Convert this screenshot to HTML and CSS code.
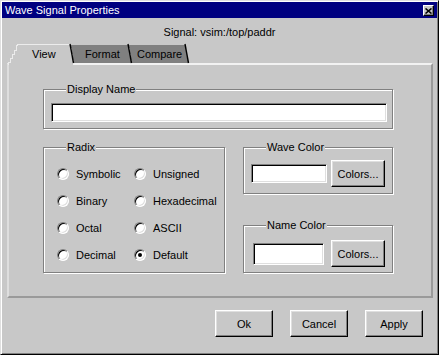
FILE: index.html
```html
<!DOCTYPE html>
<html lang="en">
<head>
    <meta charset="UTF-8">
    <title>Wave Signal Properties</title>
    <link rel="stylesheet" href="styles.css">
</head>
<body>

<div class="window">
    <div class="titlebar">
        <span class="title">Wave Signal Properties</span>
        <button class="close-btn" type="button">
            <svg width="7" height="6" viewBox="0 0 7 6"><path d="M0.5 0.5 L6.5 5.5 M6.5 0.5 L0.5 5.5" stroke="#000" stroke-width="1.6" fill="none"/></svg>
        </button>
    </div>

    <div class="signal">Signal: vsim:/top/paddr</div>

    <!-- tab strip: shapes drawn in svg, labels laid on top -->
    <div class="tabs">
        <svg class="tab-shapes" width="190" height="22" viewBox="0 0 190 22" shape-rendering="crispEdges">
            <polygon points="122,2 178,2 181,20 125,20" fill="#808080"/>
            <polygon points="64,2 121,2 124,20 67,20" fill="#808080"/>
            <polygon points="2,22 2,19 10,2 63,2 66,20 66,22" fill="#c8c8c8"/>
            <polyline points="1.5,22 1.5,19.5 3.5,19.5 3.5,15.5 5.5,15.5 5.5,11.5 7.5,11.5 7.5,7.5 9.5,7.5 9.5,3.5 10.5,1.5 63,1.5" stroke="#ececec" fill="none"/>
            <line x1="63" y1="1" x2="66.5" y2="20" stroke="#000" stroke-width="1.4" shape-rendering="auto"/>
            <line x1="121" y1="1" x2="124.5" y2="20" stroke="#000" stroke-width="1.4" shape-rendering="auto"/>
            <line x1="178" y1="1" x2="181.5" y2="20" stroke="#000" stroke-width="1.4" shape-rendering="auto"/>
        </svg>
        <div class="tab-labels">
            <span class="tab-label tab-view">View</span>
            <span class="tab-label tab-format">Format</span>
            <span class="tab-label">Compare</span>
        </div>
    </div>

    <div class="panel">
        <fieldset class="group group-name">
            <legend>Display Name</legend>
            <input type="text" class="field field-name">
        </fieldset>

        <div class="group-row">
            <fieldset class="group group-radix">
                <legend>Radix</legend>
                <div class="radix-grid">
                    <label class="radio"><span class="radio-mark"></span>Symbolic</label>
                    <label class="radio"><span class="radio-mark"></span>Unsigned</label>
                    <label class="radio"><span class="radio-mark"></span>Binary</label>
                    <label class="radio"><span class="radio-mark"></span>Hexadecimal</label>
                    <label class="radio"><span class="radio-mark"></span>Octal</label>
                    <label class="radio"><span class="radio-mark"></span>ASCII</label>
                    <label class="radio"><span class="radio-mark"></span>Decimal</label>
                    <label class="radio"><span class="radio-mark checked"></span>Default</label>
                </div>
            </fieldset>

            <div class="color-col">
                <fieldset class="group group-wave">
                    <legend>Wave Color</legend>
                    <div class="color-row">
                        <input type="text" class="field field-wave">
                        <button class="btn btn-colors" type="button">Colors...</button>
                    </div>
                </fieldset>

                <fieldset class="group group-namecolor">
                    <legend>Name Color</legend>
                    <div class="color-row">
                        <input type="text" class="field field-namecolor">
                        <button class="btn btn-colors" type="button">Colors...</button>
                    </div>
                </fieldset>
            </div>
        </div>
    </div>

    <div class="actions">
        <button class="btn" type="button">Ok</button>
        <button class="btn" type="button">Cancel</button>
        <button class="btn" type="button">Apply</button>
    </div>
</div>

</body>
</html>
```

FILE: styles.css
```css
body {
    margin: 0;
    background-color: #c8c8c8;
    font-family: "Liberation Sans", Arial, sans-serif;
    font-size: 11px;
    color: #000;
}
.window {
    width: 439px;
    height: 355px;
    box-sizing: border-box;
    padding: 1px;
    border: 1px solid;
    border-color: #dfdfdf #000 #000 #dfdfdf;
    box-shadow: inset 1px 1px #fff, inset -1px -1px #808080;
    background-color: #c8c8c8;
    display: flex;
    flex-direction: column;
}

/* Title bar */
.titlebar {
    height: 16px;
    flex: none;
    display: flex;
    align-items: center;
    justify-content: space-between;
    padding: 0 3px 0 3px;
    background-color: #000080;
    color: #fff;
}
.close-btn {
    width: 11px;
    height: 11px;
    box-sizing: border-box;
    padding: 0;
    margin-top: 1px;
    border: 1px solid;
    border-color: #fff #000 #000 #fff;
    box-shadow: inset -1px -1px #808080;
    background-color: #c8c8c8;
    display: flex;
    align-items: center;
    justify-content: center;
}
.close-btn svg {
    display: block;
}

.signal {
    padding-top: 3px;
    line-height: 22px;
    text-align: center;
}

/* Tabs */
.tabs {
    position: relative;
    z-index: 1;
    display: grid;
    height: 22px;
    margin: 0 0 -2px 5px;
}
.tab-shapes,
.tab-labels {
    grid-area: 1 / 1;
}
.tab-shapes {
    display: block;
}
.tab-labels {
    display: flex;
    padding: 1px 0 0 25px;
    line-height: 20px;
}
.tab-view {
    width: 53px;
}
.tab-format {
    width: 52px;
}

/* Panel */
.panel {
    height: 235px;
    flex: none;
    box-sizing: border-box;
    margin: 0 4px 0 5px;
    padding: 18px 0 0 34px;
    border: 2px solid;
    border-color: #f2f2f2 #9a9a9a #9a9a9a #dedede;
}

/* Group boxes */
.group {
    margin: 0;
    padding: 0;
    min-width: 0;
    box-sizing: border-box;
    border: 1px solid #808080;
    box-shadow: inset 1px 1px #fff, 1px 1px #fff;
}
.group legend {
    margin-left: 22px;
    padding: 0 1px;
    line-height: 13px;
    background-color: #c8c8c8;
}
.group-name {
    width: 350px;
}
.field {
    display: block;
    box-sizing: border-box;
    margin: 0;
    padding: 0;
    height: 19px;
    border: 1px solid;
    border-color: #808080 #fff #fff #808080;
    box-shadow: inset 1px 1px #000, inset -1px -1px #dfdfdf;
    background-color: #fff;
    outline: none;
}
.field-name {
    width: 336px;
    margin: 7px 0 6px 7px;
}

.group-row {
    display: flex;
    gap: 18px;
    margin-top: 12px;
}
.group-radix {
    width: 182px;
}
.radix-grid {
    display: grid;
    grid-template-columns: 77px auto;
    grid-auto-rows: 27px;
    margin: 6px 0 4px 13px;
}
.radio {
    display: flex;
    align-items: center;
    gap: 7px;
}
.radio-mark {
    width: 12px;
    height: 12px;
    flex: none;
    box-sizing: border-box;
    border-radius: 50%;
    border: 1px solid;
    border-color: #808080 #fff #fff #808080;
    box-shadow: inset 1px 1px #000, inset -1px -1px #dfdfdf;
    background-color: #fff;
    display: flex;
    align-items: center;
    justify-content: center;
}
.radio-mark.checked::after {
    content: "";
    width: 4px;
    height: 4px;
    border-radius: 50%;
    background-color: #000;
}

.color-col {
    width: 150px;
    display: flex;
    flex-direction: column;
}
.color-row {
    display: flex;
    align-items: center;
}
.group-wave .color-row {
    gap: 4px;
    margin: 6px 0 6px 7px;
}
.field-wave {
    width: 76px;
}
.group-namecolor {
    margin-top: 25px;
}
.group-namecolor .color-row {
    gap: 7px;
    margin: 8px 0 5px 9px;
}
.field-namecolor {
    width: 71px;
    height: 22px;
}

/* Buttons */
.btn {
    box-sizing: border-box;
    width: 58px;
    height: 27px;
    padding: 0;
    border: 1px solid;
    border-color: #fff #000 #000 #fff;
    box-shadow: inset -1px -1px #808080, inset 1px 1px #dfdfdf;
    background-color: #c8c8c8;
    font: inherit;
    color: #000;
}
.btn-colors {
    width: 54px;
}
.actions {
    display: flex;
    justify-content: flex-end;
    gap: 17px;
    margin-top: 12px;
    padding-right: 14px;
}
```
